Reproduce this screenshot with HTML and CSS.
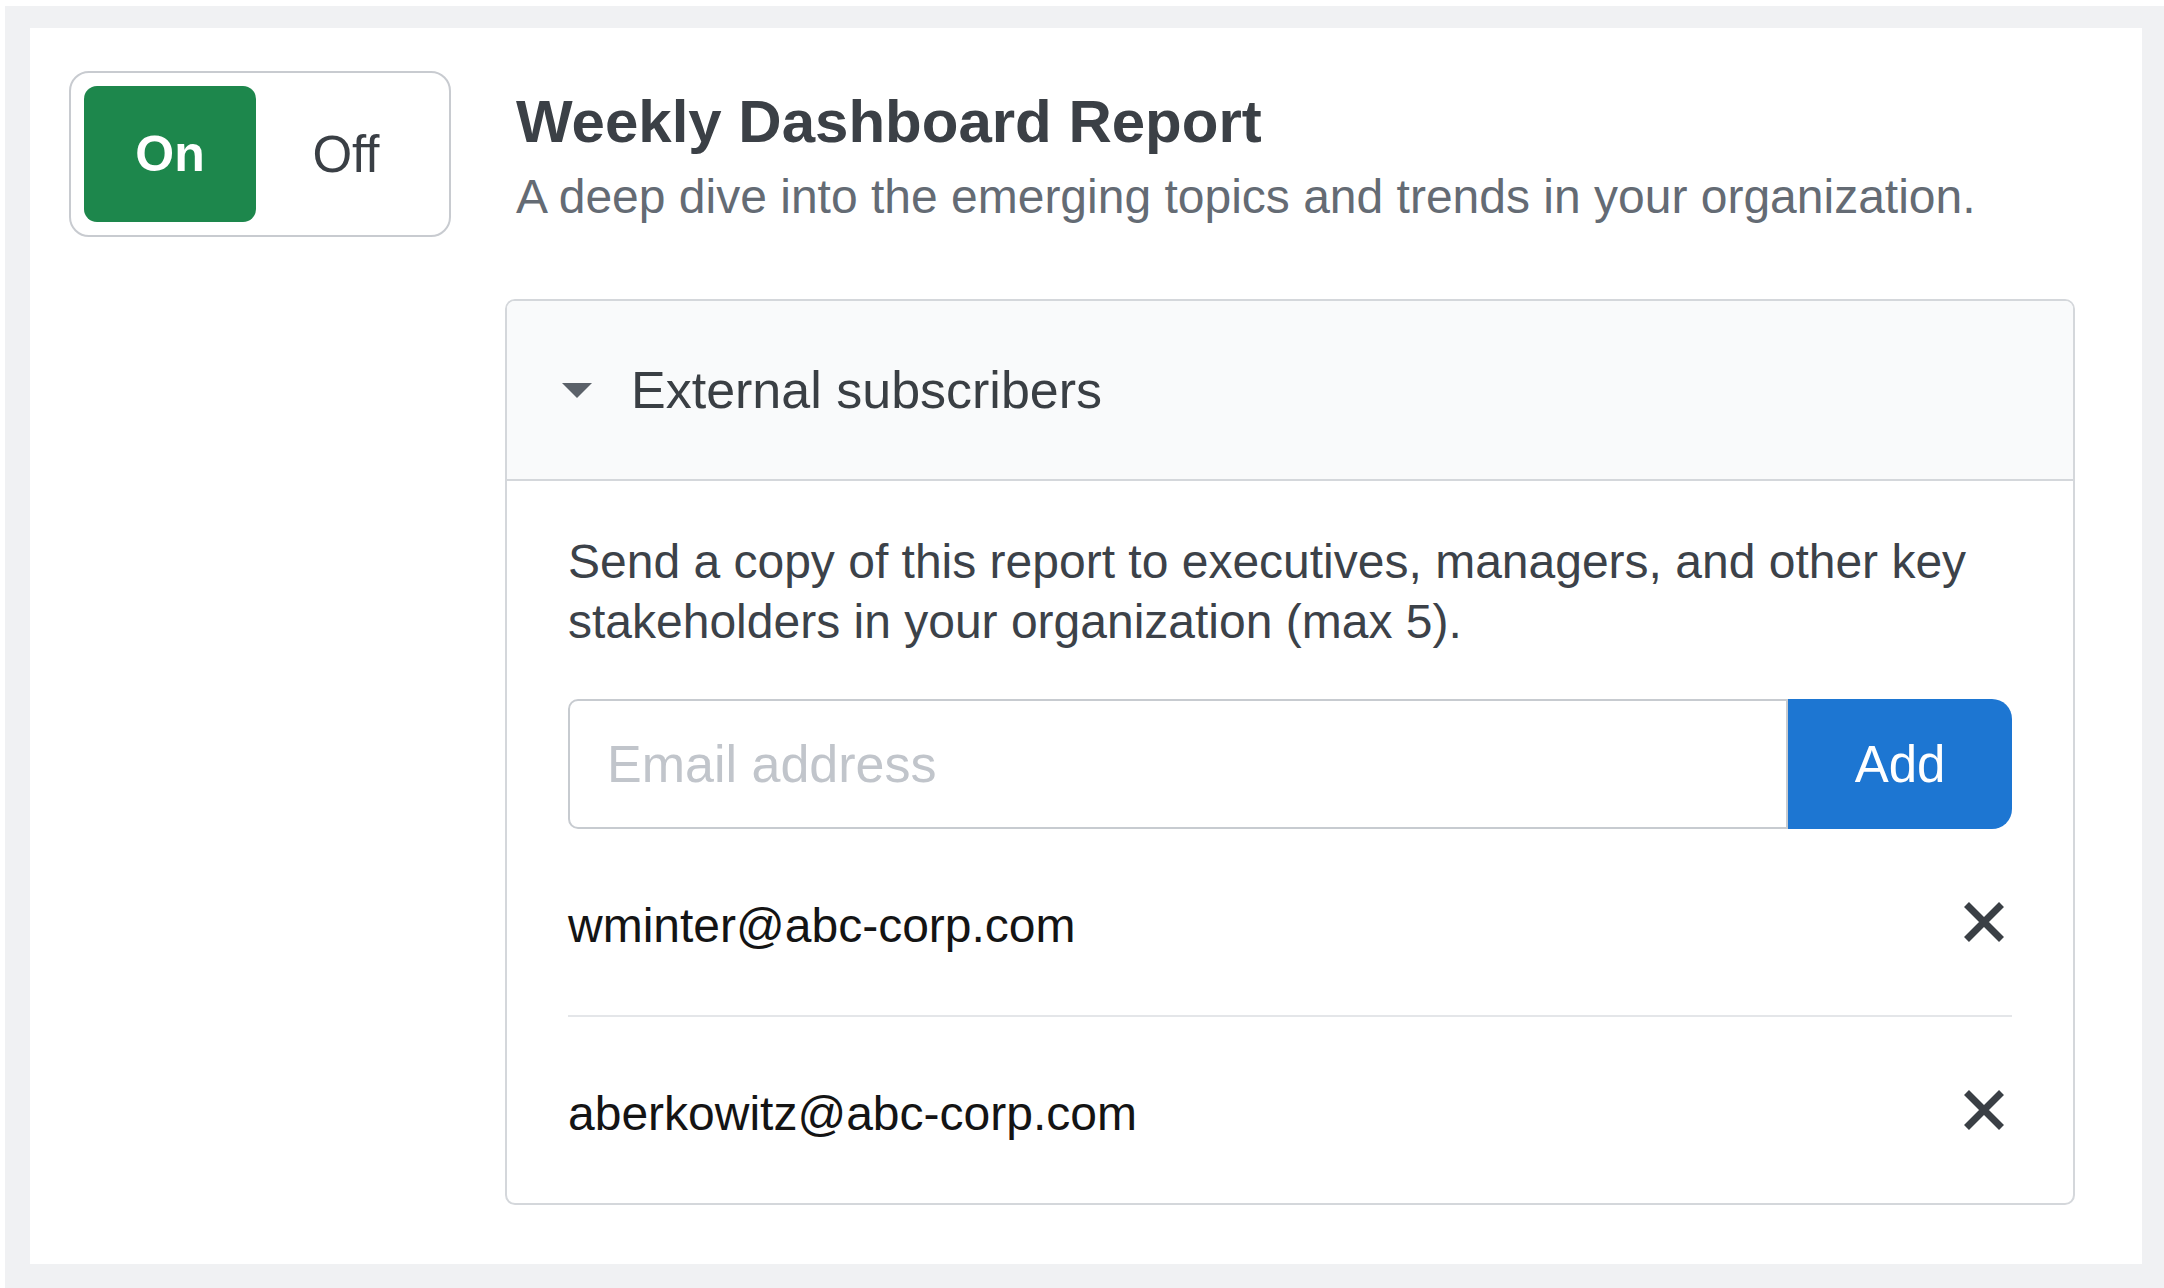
FILE: index.html
```html
<!DOCTYPE html>
<html lang="en">
<head>
<meta charset="utf-8">
<title>Weekly Dashboard Report</title>
<link rel="stylesheet" href="styles.css">
</head>
<body>
<div class="frame">
  <div class="sheet">
    <div class="toggle" role="group" aria-label="Report status">
      <div class="seg seg-on">On</div>
      <div class="seg seg-off">Off</div>
    </div>
    <div class="main">
      <div class="heading">
        <h1 class="title">Weekly Dashboard Report</h1>
        <p class="subtitle">A deep dive into the emerging topics and trends in your organization.</p>
      </div>
      <section class="panel">
        <div class="panel-header">
          <svg class="caret" viewBox="0 0 30 15" aria-hidden="true"><polygon points="0,0 30,0 15,15"/></svg>
          <span class="panel-title">External subscribers</span>
        </div>
        <div class="panel-body">
          <p class="desc">Send a copy of this report to executives, managers, and other key stakeholders in your organization (max 5).</p>
          <div class="add-row">
            <input class="email-input" type="text" placeholder="Email address">
            <button class="add-btn" type="button">Add</button>
          </div>
          <ul class="subs">
            <li class="sub">
              <span class="sub-email">wminter@abc-corp.com</span>
              <button class="remove" type="button" aria-label="Remove">
                <svg viewBox="0 0 40 40" aria-hidden="true"><path d="M2.5 2.5 L37.5 37.5 M37.5 2.5 L2.5 37.5"/></svg>
              </button>
            </li>
            <li class="sub">
              <span class="sub-email">aberkowitz@abc-corp.com</span>
              <button class="remove" type="button" aria-label="Remove">
                <svg viewBox="0 0 40 40" aria-hidden="true"><path d="M2.5 2.5 L37.5 37.5 M37.5 2.5 L2.5 37.5"/></svg>
              </button>
            </li>
          </ul>
        </div>
      </section>
    </div>
  </div>
</div>
</body>
</html>
```

FILE: styles.css
```css
html, body {
  margin: 0;
  padding: 0;
  background: #ffffff;
  overflow: hidden;
}

body {
  font-family: "Liberation Sans", Arial, Helvetica, sans-serif;
}

.frame {
  margin: 6px 0 0 5px;
  padding: 22px 22px 24px 25px;
  background: #f0f1f3;
}

.sheet {
  background: #ffffff;
  display: flex;
  align-items: flex-start;
  gap: 54px;
  padding: 43px 67px 59px 39px;
}

/* toggle */
.toggle {
  flex-shrink: 0;
  width: 382px;
  height: 166px;
  box-sizing: border-box;
  border: 2px solid #c8cbd0;
  border-radius: 20px;
  padding: 13px;
  display: flex;
}

.seg {
  display: flex;
  align-items: center;
  justify-content: center;
}

.seg-on {
  width: 172px;
  background: #1d874c;
  color: #ffffff;
  border-radius: 13px;
  font-weight: 700;
  font-size: 50px;
}

.seg-off {
  flex: 1;
  color: #3a3f45;
  font-size: 51px;
}

/* main column */
.main {
  flex: 1;
  min-width: 0;
  padding-top: 15px;
}

.heading {
  padding-left: 11px;
}

.title {
  margin: 0;
  font-size: 60px;
  line-height: 72px;
  font-weight: 700;
  color: #3b4046;
}

.subtitle {
  margin: 9px 0 0;
  font-size: 48px;
  line-height: 60px;
  color: #646b74;
}

/* panel */
.panel {
  margin-top: 72px;
  border: 2px solid #d4d7db;
  border-radius: 10px;
  overflow: hidden;
}

.panel-header {
  height: 178px;
  background: #f9fafb;
  border-bottom: 2px solid #d4d7db;
  display: flex;
  align-items: center;
  gap: 39px;
  padding-left: 55px;
}

.caret {
  flex-shrink: 0;
  width: 30px;
  height: 15px;
  fill: #5b6169;
}

.panel-title {
  font-size: 52px;
  line-height: 60px;
  color: #3a3f44;
}

.panel-body {
  padding: 51px 61px 0;
}

.desc {
  margin: 0;
  font-size: 48px;
  line-height: 60px;
  color: #3c4249;
}

.add-row {
  display: flex;
  margin-top: 47px;
  height: 130px;
}

.email-input {
  flex: 1;
  min-width: 0;
  height: 100%;
  box-sizing: border-box;
  margin: 0;
  border: 2px solid #c7cbd0;
  border-radius: 10px 0 0 10px;
  padding: 0 0 0 37px;
  background: #ffffff;
  font-family: "Liberation Sans", Arial, Helvetica, sans-serif;
  font-size: 52px;
  color: #222222;
  outline: none;
}

.email-input::placeholder {
  color: #c1c5cb;
  opacity: 1;
}

.add-btn {
  flex-shrink: 0;
  width: 224px;
  height: 100%;
  margin: 0;
  padding: 0;
  border: 0;
  border-radius: 0 20px 20px 0;
  background: #1d76d2;
  color: #ffffff;
  font-family: "Liberation Sans", Arial, Helvetica, sans-serif;
  font-size: 51px;
  cursor: pointer;
}

/* subscriber list */
.subs {
  list-style: none;
  margin: 0;
  padding: 0;
}

.sub {
  display: flex;
  align-items: center;
  justify-content: space-between;
  height: 186px;
}

.sub:not(:last-child) {
  border-bottom: 2px solid #e4e6e9;
}

.sub-email {
  font-size: 48px;
  line-height: 60px;
  padding-top: 7px;
  color: #141414;
}

.remove {
  width: 56px;
  height: 56px;
  padding: 0;
  border: 0;
  background: none;
  display: flex;
  align-items: center;
  justify-content: center;
  cursor: pointer;
}

.remove svg {
  width: 40px;
  height: 40px;
  fill: none;
  stroke: #3a3f45;
  stroke-width: 7;
}
```
